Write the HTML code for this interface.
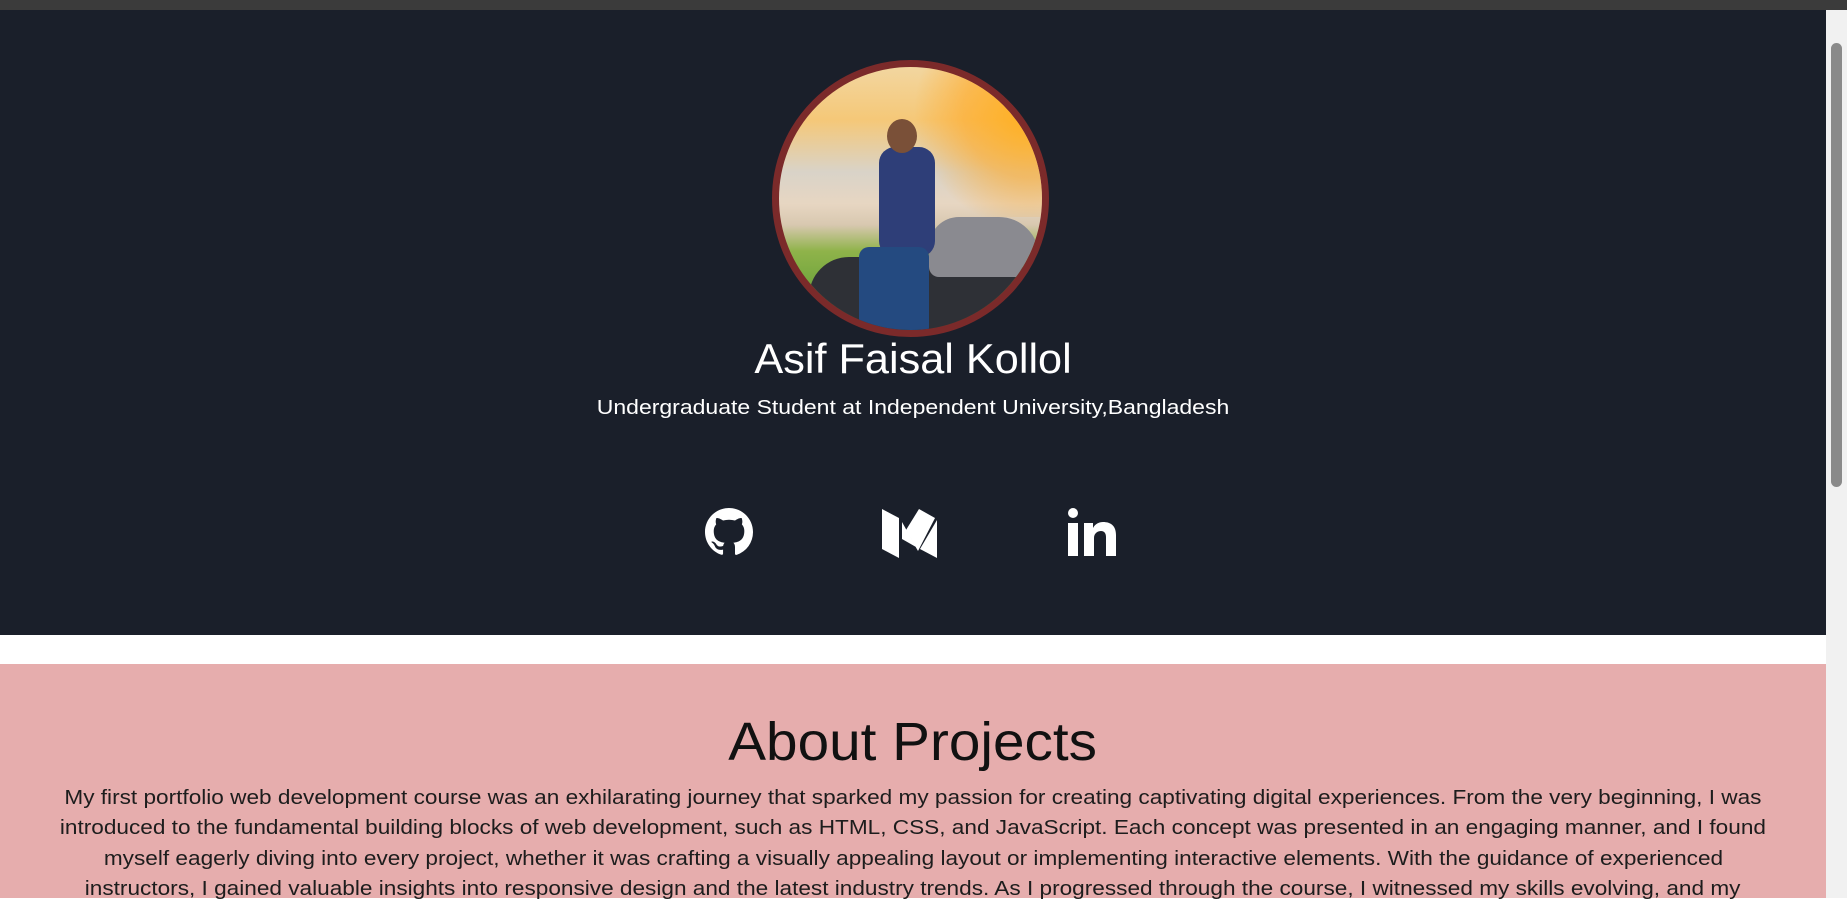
<!DOCTYPE html>
<html><head><meta charset="utf-8"><style>
*{margin:0;padding:0;box-sizing:border-box}
html,body{width:1847px;height:898px;overflow:hidden;background:#fff;font-family:"Liberation Sans",sans-serif}
.topbar{position:absolute;left:0;top:0;width:1847px;height:10px;background:#3b3b3b}
.hero{position:absolute;left:0;top:10px;width:1826px;height:625px;background:#1a1f2a}
.pink{position:absolute;left:0;top:664px;width:1826px;height:234px;background:#e6adad}
.sb{position:absolute;right:0;top:10px;width:21px;height:888px;background:#f1f1f1}
.thumb{position:absolute;right:5px;top:33px;width:11px;height:444px;background:#8a8a8a;border-radius:6px}
.avatar{position:absolute;left:772px;top:60px;width:277px;height:277px;border-radius:50%;border:7px solid #7b2a2a;overflow:hidden;
background:linear-gradient(180deg,#f2d6a0 0%,#f5c878 20%,#d9d3c8 40%,#e7d6c2 52%,#d8c8b0 60%,#8fb34a 70%,#6ea43c 85%,#3c4630 100%)}
.sun{position:absolute;right:-20px;top:0;width:160px;height:150px;background:radial-gradient(circle at 80% 30%,#ffb020 0%,rgba(255,170,40,.6) 40%,rgba(255,170,40,0) 70%)}
.name{position:absolute;left:0;width:1826px;text-align:center;color:#fff}
.name span,.p span{display:inline-block}
.p{position:absolute;left:0;width:1826px;text-align:center;color:#1d1d1d;font-size:20px;white-space:nowrap}
.p span{transform:scaleX(1.13)}
.ic{position:absolute;top:508px}
</style></head><body>
<div class="topbar"></div>
<div class="hero"></div>
<div class="avatar">
 <div class="sun"></div>
 <div style="position:absolute;left:30px;top:190px;width:240px;height:90px;background:#2e3036;border-radius:40px 60px 0 0"></div>
 <div style="position:absolute;left:150px;top:150px;width:110px;height:60px;background:#8a8a90;border-radius:30px 40px 10px 10px"></div>
 <div style="position:absolute;left:100px;top:80px;width:56px;height:110px;background:#2e3e78;border-radius:16px"></div>
 <div style="position:absolute;left:80px;top:180px;width:70px;height:90px;background:#244a80;border-radius:10px"></div>
 <div style="position:absolute;left:108px;top:52px;width:30px;height:34px;background:#7a5038;border-radius:50%"></div>
</div>
<div class="name" style="top:335px;font-size:42px"><span style="transform:scaleX(1.03)">Asif Faisal Kollol</span></div>
<div class="name" style="top:397px;font-size:20px"><span style="transform:scaleX(1.15)">Undergraduate Student at Independent University,Bangladesh</span></div>

<svg class="ic" style="left:705px" width="48" height="48" viewBox="0 0 16 16"><path fill="#fff" d="M8 0C3.58 0 0 3.58 0 8c0 3.54 2.290 6.53 5.47 7.59.4.07.55-.17.55-.38v-1.330c-2.23.48-2.7-1.07-2.7-1.07-.36-.92-.89-1.17-.89-1.17-.73-.5.06-.49.06-.49.8.06 1.23.83 1.23.83.71 1.22 1.87.87 2.33.66.07-.52.28-.87.5-1.07-1.78-.2-3.64-.89-3.64-3.95 0-.87.31-1.59.82-2.15-.08-.2-.36-1.02.08-2.12 0 0 .67-.21 2.2.82a7.6 7.6 0 0 1 4 0c1.53-1.04 2.2-.82 2.2-.82.44 1.1.16 1.92.08 2.12.51.56.82 1.27.82 2.15 0 3.07-1.87 3.75-3.65 3.95.29.25.54.73.54 1.48v2.2c0 .21.15.46.55.38A8 8 0 0 0 16 8c0-4.42-3.58-8-8-8z"/></svg>
<svg class="ic" style="left:882px" width="56" height="50" viewBox="0 0 56 50"><path fill="#fff" d="M0 1l17 9v40L0 41z"/><path fill="#fff" d="M20 14l14 25-14-8z"/><path fill="#fff" d="M37 1l16 9-17 33-12-21z"/><path fill="#fff" d="M55 12v38l-17-9z"/></svg>
<svg class="ic" style="left:1067px" width="50" height="50" viewBox="0 0 50 50"><circle cx="6" cy="5" r="5" fill="#fff"/><rect x="1" y="15" width="10" height="33" fill="#fff"/><path fill="#fff" d="M17 15h9v5c2-4 6-6 10-6 8 0 13 4 13 13v21h-10V29c0-4-2-6-5-6s-7 2-7 7v18H17z"/></svg>

<div style="position:absolute;top:635px;left:0;width:1826px;height:29px;background:#fff"></div>
<div class="pink"></div>
<div class="name" style="top:711px;font-size:54px;color:#111"><span style="transform:scaleX(1.05)">About Projects</span></div>
<div class="p" style="top:787px"><span>My first portfolio web development course was an exhilarating journey that sparked my passion for creating captivating digital experiences. From the very beginning, I was</span></div>
<div class="p" style="top:817px"><span>introduced to the fundamental building blocks of web development, such as HTML, CSS, and JavaScript. Each concept was presented in an engaging manner, and I found</span></div>
<div class="p" style="top:848px"><span>myself eagerly diving into every project, whether it was crafting a visually appealing layout or implementing interactive elements. With the guidance of experienced</span></div>
<div class="p" style="top:878px"><span>instructors, I gained valuable insights into responsive design and the latest industry trends. As I progressed through the course, I witnessed my skills evolving, and my</span></div>
<div class="sb"><div class="thumb"></div></div>
</body></html>
